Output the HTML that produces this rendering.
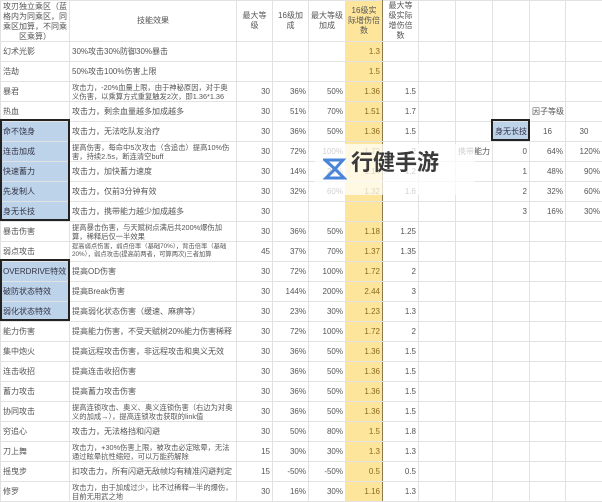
<!DOCTYPE html>
<html><head><meta charset="utf-8"><style>
body{margin:0;width:602px;height:500px;overflow:hidden;background:#fff;font-family:"Liberation Sans","Noto Sans CJK SC",sans-serif;color:#555;position:relative}
table{border-collapse:collapse;table-layout:fixed;position:absolute;left:0;top:0;width:602px}
td{border:1px solid #e2e2e2;height:20px;padding:0 2px;font-size:8px;line-height:10px;overflow:hidden;white-space:nowrap;box-sizing:border-box}
tr.h td{height:40px;text-align:center;white-space:normal;font-size:8px;line-height:10px}
tr.h td div{max-height:39px;overflow:hidden}
td.n{text-align:right}
td.w div{white-space:normal;font-size:7.3px;line-height:9px;height:18px;overflow:hidden}
td.s div{white-space:normal;font-size:6.3px;line-height:8.5px;height:18px;overflow:hidden}
td.y{background:#fde59b;color:#8a6a22;text-align:right;border-left:1px solid #8b7b52;border-right:1px solid #8b7b52}
td.b{background:#bdd3ea;color:#334}
.box{position:absolute;border:2px solid #222;box-sizing:border-box}
</style></head><body>
<table>
<colgroup><col style="width:69px"><col style="width:167px"><col style="width:36px"><col style="width:36px"><col style="width:37px"><col style="width:37px"><col style="width:36px"><col style="width:37px"><col style="width:37px"><col style="width:37px"><col style="width:36px"><col style="width:37px"></colgroup>
<tr class="h"><td><div>攻刃独立乘区（蓝格内为同乘区，同乘区加算，不同乘区乘算）</div></td><td>技能效果</td><td>最大等级</td><td>16级加成</td><td>最大等级加成</td><td class="y" style="text-align:center;color:#555">16级实际增伤倍数</td><td>最大等级实际增伤倍数</td><td></td><td></td><td></td><td></td><td></td></tr>
<tr><td>幻术光影</td><td>30%攻击30%防御30%暴击</td><td></td><td></td><td></td><td class="y">1.3</td><td></td><td></td><td></td><td></td><td></td><td></td></tr>
<tr><td>浩劫</td><td>50%攻击100%伤害上限</td><td></td><td></td><td></td><td class="y">1.5</td><td></td><td></td><td></td><td></td><td></td><td></td></tr>
<tr><td>暴君</td><td class="w"><div>攻击力，-20%血量上限，由于神秘原因，对于奥义伤害，以乘算方式重复触发2次，即1.36*1.36</div></td><td class="n">30</td><td class="n">36%</td><td class="n">50%</td><td class="y">1.36</td><td class="n">1.5</td><td></td><td></td><td></td><td></td><td></td></tr>
<tr><td>热血</td><td>攻击力，剩余血量越多加成越多</td><td class="n">30</td><td class="n">51%</td><td class="n">70%</td><td class="y">1.51</td><td class="n">1.7</td><td></td><td></td><td></td><td style="text-align:center">因子等级</td><td></td></tr>
<tr><td class="b">命不饶身</td><td>攻击力，无法吃队友治疗</td><td class="n">30</td><td class="n">36%</td><td class="n">50%</td><td class="y">1.36</td><td class="n">1.5</td><td></td><td></td><td class="b">身无长技</td><td style="text-align:center">16</td><td style="text-align:center">30</td></tr>
<tr><td class="b">连击加成</td><td class="w"><div>提高伤害，每命中5次攻击（含追击）提高10%伤害，持续2.5s，断连清空buff</div></td><td class="n">30</td><td class="n">72%</td><td class="n">100%</td><td class="y">1.72</td><td class="n">2</td><td></td><td>携带能力</td><td class="n">0</td><td class="n">64%</td><td class="n">120%</td></tr>
<tr><td class="b">快速蓄力</td><td>攻击力，加快蓄力速度</td><td class="n">30</td><td class="n">14%</td><td class="n">20%</td><td class="y">1.14</td><td class="n">1.2</td><td></td><td></td><td class="n">1</td><td class="n">48%</td><td class="n">90%</td></tr>
<tr><td class="b">先发制人</td><td>攻击力，仅前3分钟有效</td><td class="n">30</td><td class="n">32%</td><td class="n">60%</td><td class="y">1.32</td><td class="n">1.6</td><td></td><td></td><td class="n">2</td><td class="n">32%</td><td class="n">60%</td></tr>
<tr><td class="b">身无长技</td><td>攻击力，携带能力越少加成越多</td><td class="n">30</td><td></td><td></td><td class="y"></td><td></td><td></td><td></td><td class="n">3</td><td class="n">16%</td><td class="n">30%</td></tr>
<tr><td>暴击伤害</td><td class="w"><div>提高暴击伤害，与天赋树点满后共200%爆伤加算，稀释后仅一半效果</div></td><td class="n">30</td><td class="n">36%</td><td class="n">50%</td><td class="y">1.18</td><td class="n">1.25</td><td></td><td></td><td></td><td></td><td></td></tr>
<tr><td>弱点攻击</td><td class="s"><div>提高弱点伤害，弱点倍率（基础70%），背击倍率（基础20%），弱点攻击(提高前两者，可算两次)三者加算</div></td><td class="n">45</td><td class="n">37%</td><td class="n">70%</td><td class="y">1.37</td><td class="n">1.35</td><td></td><td></td><td></td><td></td><td></td></tr>
<tr><td class="b">OVERDRIVE特效</td><td>提高OD伤害</td><td class="n">30</td><td class="n">72%</td><td class="n">100%</td><td class="y">1.72</td><td class="n">2</td><td></td><td></td><td></td><td></td><td></td></tr>
<tr><td class="b">破防状态特效</td><td>提高Break伤害</td><td class="n">30</td><td class="n">144%</td><td class="n">200%</td><td class="y">2.44</td><td class="n">3</td><td></td><td></td><td></td><td></td><td></td></tr>
<tr><td class="b">弱化状态特效</td><td>提高弱化状态伤害（缓速、麻痹等）</td><td class="n">30</td><td class="n">23%</td><td class="n">30%</td><td class="y">1.23</td><td class="n">1.3</td><td></td><td></td><td></td><td></td><td></td></tr>
<tr><td>能力伤害</td><td>提高能力伤害，不受天赋树20%能力伤害稀释</td><td class="n">30</td><td class="n">72%</td><td class="n">100%</td><td class="y">1.72</td><td class="n">2</td><td></td><td></td><td></td><td></td><td></td></tr>
<tr><td>集中炮火</td><td>提高远程攻击伤害，非远程攻击和奥义无效</td><td class="n">30</td><td class="n">36%</td><td class="n">50%</td><td class="y">1.36</td><td class="n">1.5</td><td></td><td></td><td></td><td></td><td></td></tr>
<tr><td>连击收招</td><td>提高连击收招伤害</td><td class="n">30</td><td class="n">36%</td><td class="n">50%</td><td class="y">1.36</td><td class="n">1.5</td><td></td><td></td><td></td><td></td><td></td></tr>
<tr><td>蓄力攻击</td><td>提高蓄力攻击伤害</td><td class="n">30</td><td class="n">36%</td><td class="n">50%</td><td class="y">1.36</td><td class="n">1.5</td><td></td><td></td><td></td><td></td><td></td></tr>
<tr><td>协同攻击</td><td class="w"><div>提高连锁攻击、奥义、奥义连锁伤害（右边为对奥义的加成→），提高连锁攻击获取的link值</div></td><td class="n">30</td><td class="n">36%</td><td class="n">50%</td><td class="y">1.36</td><td class="n">1.5</td><td></td><td></td><td></td><td></td><td></td></tr>
<tr><td>穷追心</td><td>攻击力，无法格挡和闪避</td><td class="n">30</td><td class="n">50%</td><td class="n">80%</td><td class="y">1.5</td><td class="n">1.8</td><td></td><td></td><td></td><td></td><td></td></tr>
<tr><td>刀上舞</td><td class="w"><div>攻击力，+30%伤害上限，被攻击必定眩晕，无法通过眩晕抗性缩短，可以万能药解除</div></td><td class="n">15</td><td class="n">30%</td><td class="n">30%</td><td class="y">1.3</td><td class="n">1.3</td><td></td><td></td><td></td><td></td><td></td></tr>
<tr><td>摇曳步</td><td>扣攻击力，所有闪避无敌帧均有精准闪避判定</td><td class="n">15</td><td class="n">-50%</td><td class="n">-50%</td><td class="y">0.5</td><td class="n">0.5</td><td></td><td></td><td></td><td></td><td></td></tr>
<tr><td>修罗</td><td class="w"><div>攻击力，由于加成过少，比不过稀释一半的爆伤，目前无用武之地</div></td><td class="n">30</td><td class="n">16%</td><td class="n">30%</td><td class="y">1.16</td><td class="n">1.3</td><td></td><td></td><td></td><td></td><td></td></tr>
</table>
<div class="box" style="left:0;top:119px;width:70px;height:102px"></div>
<div class="box" style="left:0;top:259px;width:70px;height:62px"></div>
<div class="box" style="left:491px;top:119px;width:39px;height:22px"></div>
<div style="position:absolute;left:315px;top:144px;width:160px;height:51px;background:rgba(255,255,255,0.72)"></div>
<svg style="position:absolute;left:323px;top:158px" width="24" height="22" viewBox="0 0 24 22"><path d="M2 2 L20 2 L12 11 Z" fill="none" stroke="#4a84d8" stroke-width="3"/><path d="M12 11 L3 20 L21 20 Z" fill="none" stroke="#4a84d8" stroke-width="3"/></svg>
<div style="position:absolute;left:351px;top:148px;font-size:22px;font-weight:bold;color:#3a3a3a;line-height:26px;font-family:'Noto Sans CJK SC',sans-serif">行健手游</div>
</body></html>
